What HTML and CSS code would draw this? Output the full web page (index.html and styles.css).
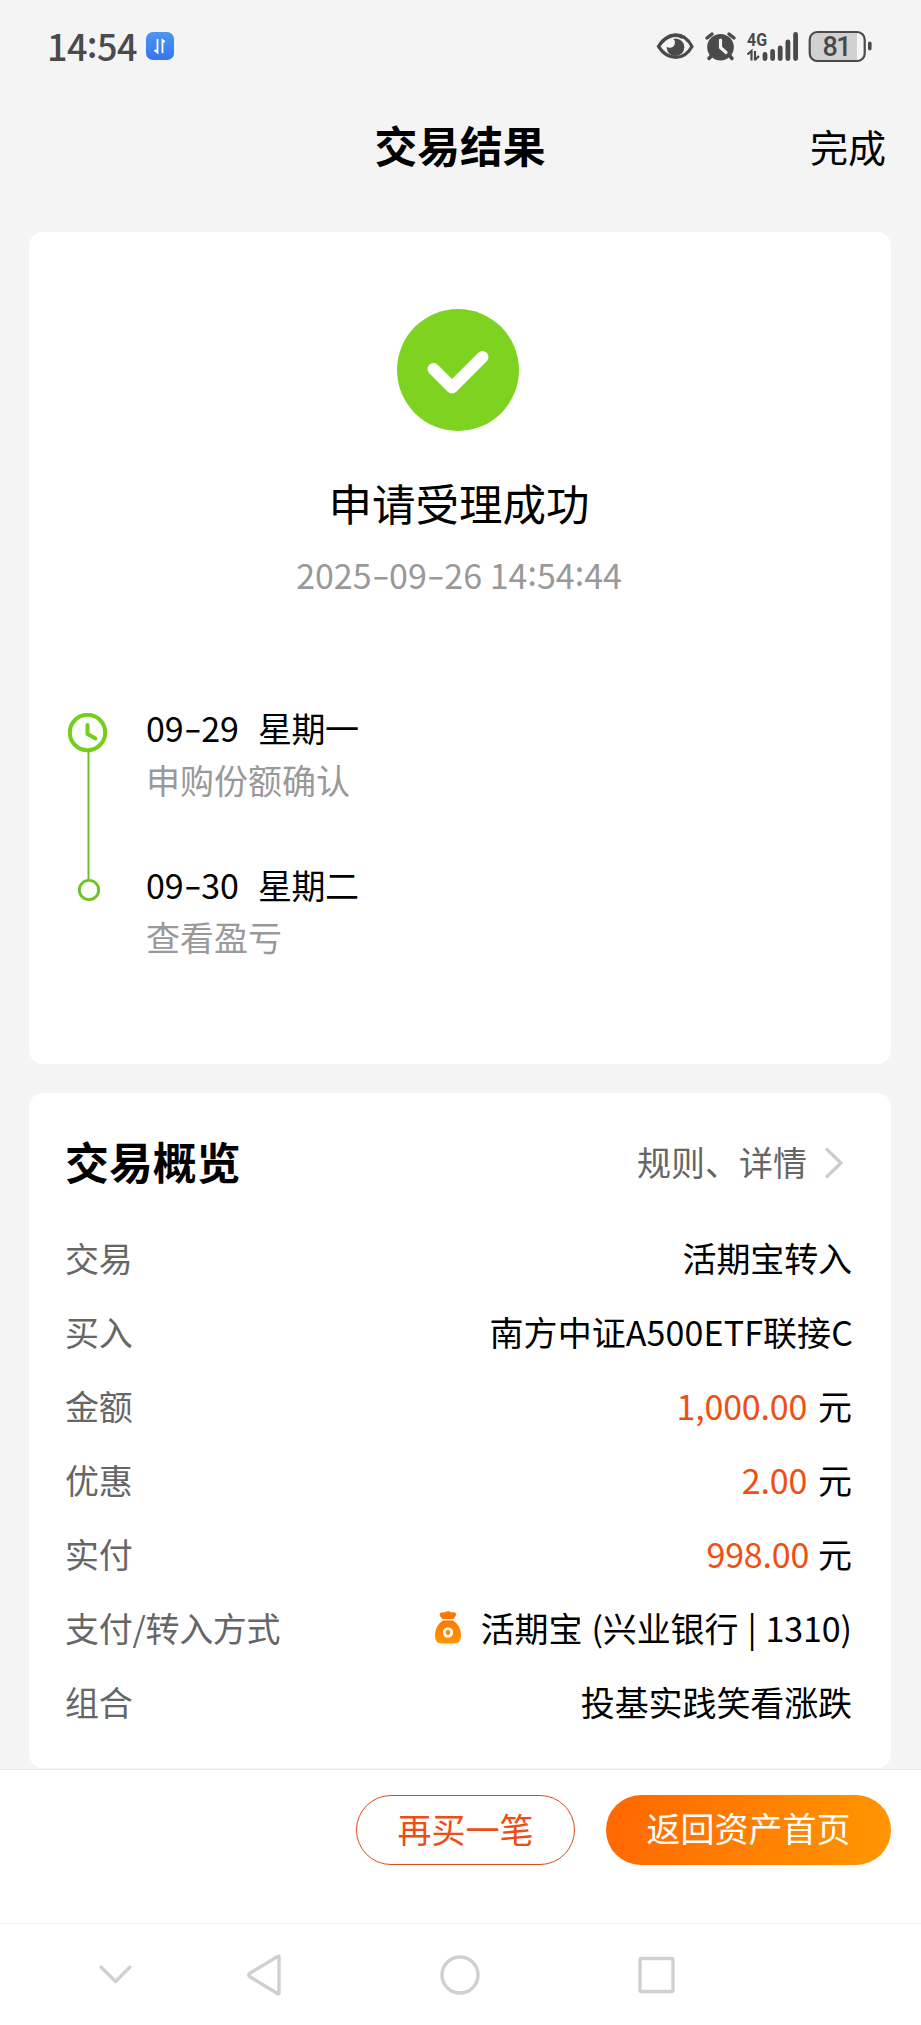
FILE: index.html
```html
<!DOCTYPE html>
<html lang="zh-CN">
<head>
<meta charset="utf-8">
<title>交易结果</title>
<link rel="stylesheet" href="styles.css">
</head>
<body>
<div class="screen">
  <div class="status">
    <span class="time">14<span class="colon">:</span>54</span>
    <svg class="sync" width="28" height="28" viewBox="0 0 28 28"><defs><linearGradient id="blue" x1="0" y1="0" x2="0" y2="1"><stop offset="0" stop-color="#4b97f2"/><stop offset="1" stop-color="#3873ec"/></linearGradient></defs><rect width="28" height="28" rx="7" fill="url(#blue)"/><path d="M11.500 7v13.500L8.500 18M16.500 21V8L19 10" fill="none" stroke="#fff" stroke-width="1.800"/></svg>
    <svg class="indicators" width="216" height="42" viewBox="0 -4 216 42" fill="#4a4a4a">
      <path d="M2.500 16.500C12 1 28 1 36 16.500C28 31 12 31 2.500 16.500Z" fill="none" stroke="#4a4a4a" stroke-width="3.200"/>
      <circle cx="19.500" cy="17.300" r="8.800"/>
      <circle cx="13.800" cy="12.600" r="5.200" fill="#f4f4f4"/>
      <path d="M2.500 16.500C9 6 19 3 27 7.500" fill="none" stroke="#4a4a4a" stroke-width="3.200"/>
      <circle cx="64.500" cy="17.200" r="13.300"/>
      <path d="M51 8l5-4M78 8l-5-4" stroke="#4a4a4a" stroke-width="3.500" stroke-linecap="round"/>
      <path d="M56 25l-3 3.500M73 25l3 3.500" stroke="#4a4a4a" stroke-width="3.500" stroke-linecap="round"/>
      <path d="M64.500 10v7.500l5.500 5" fill="none" stroke="#f4f4f4" stroke-width="3.200" stroke-linecap="round"/>
      <text class="net" x="91" y="16" textLength="20" lengthAdjust="spacingAndGlyphs">4G</text>
      <path d="M91.500 24.500l4-3.500v9.500M99 21v9.500M99 30l4-4" fill="none" stroke="#4a4a4a" stroke-width="2.200"/>
      <path d="M109 24.500v4M116.600 21.500v7M124.200 18v10.500M131.900 12v16.500M139.600 4.500v24" stroke="#4a4a4a" stroke-width="4.800" stroke-linecap="round"/>
      <path d="M160 3h41v27h-41q-6 0-6-6V9q0-6 6-6Z" fill="#d1d1d1"/>
      <rect x="153.700" y="2" width="55" height="29" rx="7.500" fill="none" stroke="#4a4a4a" stroke-width="2.200"/>
      <rect x="212" y="11.500" width="3.600" height="9" rx="1.800"/>
      <text class="pct" x="166.500" y="26" textLength="29">81</text>
    </svg>
  </div>
  <div class="header">
    <h1>交易结果</h1>
    <span class="done">完成</span>
  </div>

  <section class="card result">
    <svg class="tick" width="122" height="122" viewBox="0 0 122 122"><circle cx="61" cy="61" r="61" fill="#7ed321"/><path d="M36.500 60l18.500 18.500L85.500 48" fill="none" stroke="#fff" stroke-width="12" stroke-linecap="round" stroke-linejoin="round"/></svg>
    <h2>申请受理成功</h2>
    <div class="stamp">2025<span class="dash">-</span>09<span class="dash">-</span>26 14<span class="colon">:</span>54<span class="colon">:</span>44</div>
    <div class="timeline">
      <svg class="track" width="40" height="190" viewBox="0 0 40 190">
        <path d="M20.500 39v128" stroke="#72bf2b" stroke-width="2"/>
        <circle cx="19.500" cy="19.500" r="17.700" fill="#fff" stroke="#75ce1b" stroke-width="4"/>
        <path d="M19.500 12v9l8 4.500" fill="none" stroke="#75ce1b" stroke-width="4" stroke-linecap="round" stroke-linejoin="round"/>
        <circle cx="21" cy="177" r="9.700" fill="#fff" stroke="#6cc424" stroke-width="2.800"/>
      </svg>
      <div class="steps">
        <div class="step"><div class="day">09<span class="dash">-</span>29<span class="week">星期一</span></div><div class="what">申购份额确认</div></div>
        <div class="step"><div class="day">09<span class="dash">-</span>30<span class="week">星期二</span></div><div class="what">查看盈亏</div></div>
      </div>
    </div>
  </section>

  <section class="card overview">
    <div class="top">
      <h2>交易概览</h2>
      <span class="more">规则、详情<svg width="20" height="34" viewBox="0 0 20 34"><path d="M2 2.500L17 17L2 31.500" fill="none" stroke="#ccc" stroke-width="3.200"/></svg></span>
    </div>
    <div class="row"><span class="label">交易</span><span>活期宝转入</span></div>
    <div class="row"><span class="label">买入</span><span class="fund">南方中证A500ETF联接C</span></div>
    <div class="row"><span class="label">金额</span><span><span class="sum">1,000.00</span>元</span></div>
    <div class="row"><span class="label">优惠</span><span><span class="sum">2.00</span>元</span></div>
    <div class="row"><span class="label">实付</span><span><span class="sum paid">998.00</span>元</span></div>
    <div class="row"><span class="label">支付/转入方式</span><span class="pay"><svg width="26" height="33" viewBox="0 0 26 33"><defs><linearGradient id="bag" x1="0" y1="0" x2="0" y2="1"><stop offset="0" stop-color="#ff7a00"/><stop offset="1" stop-color="#ff9400"/></linearGradient></defs><path d="M7.500 8C5 6 4.200 3.500 5 2.200Q6.500.600 9.500 1.500Q13-1 16.500 1.500Q19.500.600 21 2.200Q21.800 4 18.500 8Z" fill="#ff7600"/><path d="M8 9.500H18C23 12.500 26 18 26 25Q26 32.500 19 32.500H7Q0 32.500 0 25C0 18 3 12.500 8 9.500Z" fill="url(#bag)"/><circle cx="13" cy="21.500" r="3.800" fill="none" stroke="#fff" stroke-width="2.700"/></svg>活期宝 (兴业银行 | 1310)</span></div>
    <div class="row"><span class="label">组合</span><span>投基实践笑看涨跌</span></div>
  </section>

  <div class="actions">
    <button class="btn again">再买一笔</button>
    <button class="btn home">返回资产首页</button>
  </div>
  <div class="navbar">
    <svg width="921" height="101" viewBox="0 0 921 101" fill="none" stroke="#d0d0d0" stroke-width="3.400" stroke-linejoin="round" stroke-linecap="round">
      <path d="M101 43l14.500 14.500L130 43"/>
      <path d="M279 33v36q0 1.500-1.500.500L249.500 52.500q-1.500-1.500 0-3L277.500 32.500q1.500-1 1.500.500Z"/>
      <circle cx="460" cy="51" r="18"/>
      <rect x="640" y="34.500" width="33" height="33" rx="1.500"/>
    </svg>
  </div>
</div>
</body>
</html>
```
FILE: styles.css
```css
* { box-sizing: border-box; margin: 0; padding: 0; }
body {
  background: #f4f4f4;
  color: #000;
  font-family: "Noto Sans CJK SC", sans-serif;
  font-size: 34px;
}
svg { display: block; flex: none; }
.screen { width: 921px; height: 2025px; display: flex; flex-direction: column; overflow: hidden; }

.status { height: 92px; padding: 0 48px 0 47px; display: flex; align-items: center; }
.time { font-size: 36px; line-height: 40px; padding-bottom: 2px; font-weight: 500; color: #4a4a4a; letter-spacing: -.6px; }
.colon { position: relative; top: -3px; }
.sync { margin-left: 9px; }
.indicators { margin-left: auto; margin-right: 1px; margin-top: 1px; width: 216px; }
.net { font-family: Roboto, sans-serif; font-size: 19px; font-weight: 700; }
.pct { font-family: Roboto, sans-serif; font-size: 27px; font-weight: 500; }

.header { height: 140px; display: grid; grid-template-columns: 1fr auto 1fr; padding: 21px 35px 0 34px; }
.header h1 { grid-column: 2; font-size: 42.800px; line-height: 62px; }
.done { justify-self: end; font-size: 38px; line-height: 66px; }

.card { margin: 0 30px 0 29px; background: #fff; border-radius: 14px; flex: none; }
.result { height: 832px; display: flex; flex-direction: column; align-items: center; padding-top: 77px; }
.tick { margin-right: 4px; }
.result h2 { margin-top: 42px; margin-right: 2px; font-size: 43.500px; line-height: 60px; font-weight: 400; }
.stamp { margin-top: 19px; margin-right: 2px; line-height: 46px; color: #999; white-space: nowrap; }
.dash { display: inline-block; width: 17.500px; text-align: center; transform: scaleX(1.500) translateY(-1px); }
.timeline { align-self: stretch; display: flex; padding-left: 39px; margin-top: 115px; }
.steps { margin-left: 38px; margin-top: -11px; display: flex; flex-direction: column; gap: 53px; }
.day, .what { line-height: 52px; height: 52px; }
.day { white-space: nowrap; }
.week { margin-left: 19px; letter-spacing: -.5px; }
.what { color: #999; }

.overview { margin-top: 29px; height: 675px; padding: 26px 39px 0 36px; }
.top { height: 102px; display: flex; justify-content: space-between; }
.top h2 { font-size: 43.900px; line-height: 84px; }
.more { display: flex; align-items: center; gap: 17px; height: 86px; color: #666; line-height: 86px; padding-right: 8px; }
.more svg { margin-top: 1px; }
.row { height: 74px; display: flex; justify-content: space-between; line-height: 74px; letter-spacing: -.1px; }
.label { color: #666; letter-spacing: -.3px; }
.fund { letter-spacing: .1px; margin-right: -1px; }
.sum { color: #f24e12; margin-right: 11px; letter-spacing: -.2px; }
.paid { margin-right: 9px; }
.pay { display: flex; align-items: center; gap: 20px; word-spacing: 1.500px; }
.pay svg { margin-top: -1px; }

.actions { margin-top: 1px; flex: none; height: 154px; padding: 25px 30px 0 0; display: flex; justify-content: flex-end; gap: 31px; background: #fff; border-top: 1px solid #e8e8e8; }
.btn { height: 70px; border-radius: 35px; font: inherit; line-height: 66px; padding-bottom: 4px; }
.again { width: 219px; background: #fff; border: 1.500px solid #dc4a1c; color: #ee4d13; }
.home { width: 285px; border: 0; color: #fff; background: linear-gradient(100deg, #ff6700, #ff9700); }
.navbar { flex: none; height: 102px; background: #fff; border-top: 1px solid #f2f2f2; }
```
